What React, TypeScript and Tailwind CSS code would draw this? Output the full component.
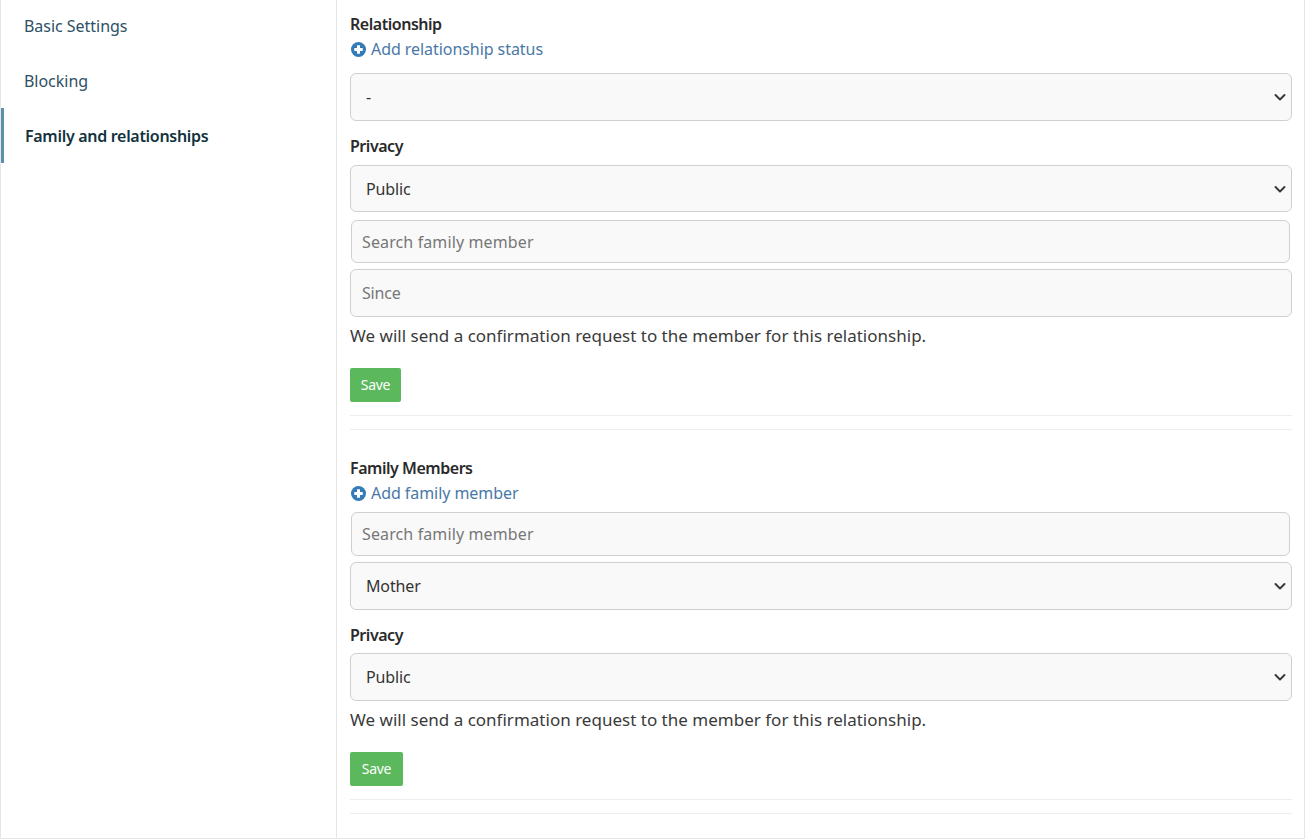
const font = "font-['Noto_Sans',sans-serif]";
const fieldBase =
  "block rounded-[6px] border border-[#d0d0d0] bg-[#f9f9f9] text-[#333]";

function NavItem({ label, active }: { label: string; active?: boolean }) {
  return (
    <div
      className={
        active
          ? "flex h-[55px] items-center border-l-[3px] border-[#5b8fab] pl-[21px] text-[16px] font-semibold tracking-[-0.3px] text-[#12333d]"
          : "flex h-[55px] items-center pl-[23px] text-[16px] tracking-[-0.03px] text-[#2d5065]"
      }
    >
      {label}
    </div>
  );
}

function SectionLabel({ children, className }: { children: string; className: string }) {
  return (
    <div className={`text-[16px] leading-[20px] font-semibold tracking-[-0.47px] text-[#2a2a2a] ${className}`}>
      {children}
    </div>
  );
}

function PlusCircle() {
  return (
    <svg viewBox="0 0 16 16" className="mr-[6px] ml-[1px] h-[15px] w-[15px] shrink-0">
      <circle cx="8" cy="8" r="8" fill="#337ab7" />
      <path d="M8 3.5v9M3.5 8h9" stroke="#fff" strokeWidth="3.2" />
    </svg>
  );
}

function AddLink({ label, className }: { label: string; className: string }) {
  return (
    <div className={`-mr-px flex items-center text-[16px] leading-[20px] tracking-[-0.06px] text-[#4a78a6] ${className}`}>
      <PlusCircle />
      <span className="-ml-px">{label}</span>
    </div>
  );
}

function Select({ value, h, className }: { value: string; h: string; className: string }) {
  return (
    <div className={`relative ${className}`}>
      <select
        defaultValue={value}
        className={`${fieldBase} ${h} w-full appearance-none pl-[15px] text-[16px] tracking-[-0.15px]`}
      >
        <option>{value}</option>
      </select>
      <svg
        viewBox="0 0 16 16"
        fill="none"
        className="pointer-events-none absolute top-1/2 right-[4px] h-[16px] w-[16px] -translate-y-1/2"
      >
        <path d="m3.5 6 4.5 4.5L12.5 6" stroke="#343a40" strokeWidth="2" strokeLinecap="round" strokeLinejoin="round" />
      </svg>
    </div>
  );
}

function SearchField({ h, className }: { h: string; className: string }) {
  return (
    <input
      placeholder="Search family member"
      className={`${fieldBase} ${h} ml-[1px] w-[939px] px-[10px] text-[16px] tracking-[0.12px] placeholder:text-[#777] ${className}`}
    />
  );
}

function Note({ className }: { className: string }) {
  return (
    <p className={`text-[17px] leading-[22px] tracking-[0.01px] text-[#3a3a3a] ${className}`}>
      We will send a confirmation request to the member for this relationship.
    </p>
  );
}

function SaveButton({ className, w }: { className: string; w: string }) {
  return (
    <button className={`block h-[34px] ${w} rounded-[2px] bg-[#5cb85c] pb-[2px] text-center text-[14px] tracking-[-0.3px] text-white ${className}`}>
      Save
    </button>
  );
}

function Dividers() {
  return (
    <>
      <div className="mt-[13px] h-px bg-[#eeeeee]" />
      <div className="mt-[13px] h-px bg-[#eeeeee]" />
    </>
  );
}

export default function App() {
  return (
    <div className={`flex h-[840px] w-[1305px] overflow-hidden bg-white ${font}`}>
      <aside className="h-[839px] w-[337px] shrink-0 border-r border-b border-l border-[#e6e6e6]">
        <div className="-mt-[2px]">
          <NavItem label="Basic Settings" />
          <NavItem label="Blocking" />
          <NavItem label="Family and relationships" active />
        </div>
      </aside>
      <main className="h-[839px] flex-1 border-r border-b border-[#e6e6e6] pr-[12px] pl-[13px]">
        <SectionLabel className="mt-[14px]">Relationship</SectionLabel>
        <AddLink label="Add relationship status" className="mt-[5px]" />
        <Select value="-" h="h-[48px]" className="mt-[14px]" />
        <SectionLabel className="mt-[15px]">Privacy</SectionLabel>
        <Select value="Public" h="h-[47px]" className="mt-[9px]" />
        <SearchField h="h-[43px]" className="mt-[8px]" />
        <input
          placeholder="Since"
          className={`${fieldBase} mt-[6px] h-[48px] w-full px-[11px] text-[16px] tracking-[-0.2px] placeholder:text-[#777]`}
        />
        <Note className="mt-[8px]" />
        <SaveButton w="w-[51px]" className="mt-[21px]" />
        <Dividers />

        <SectionLabel className="mt-[28px]">Family Members</SectionLabel>
        <AddLink label="Add family member" className="mt-[5px]" />
        <SearchField h="h-[44px]" className="mt-[9px]" />
        <Select value="Mother" h="h-[48px]" className="mt-[6px]" />
        <SectionLabel className="mt-[15px]">Privacy</SectionLabel>
        <Select value="Public" h="h-[48px]" className="mt-[8px]" />
        <Note className="mt-[8px]" />
        <SaveButton w="w-[53px]" className="mt-[21px]" />
        <Dividers />
      </main>
    </div>
  );
}
